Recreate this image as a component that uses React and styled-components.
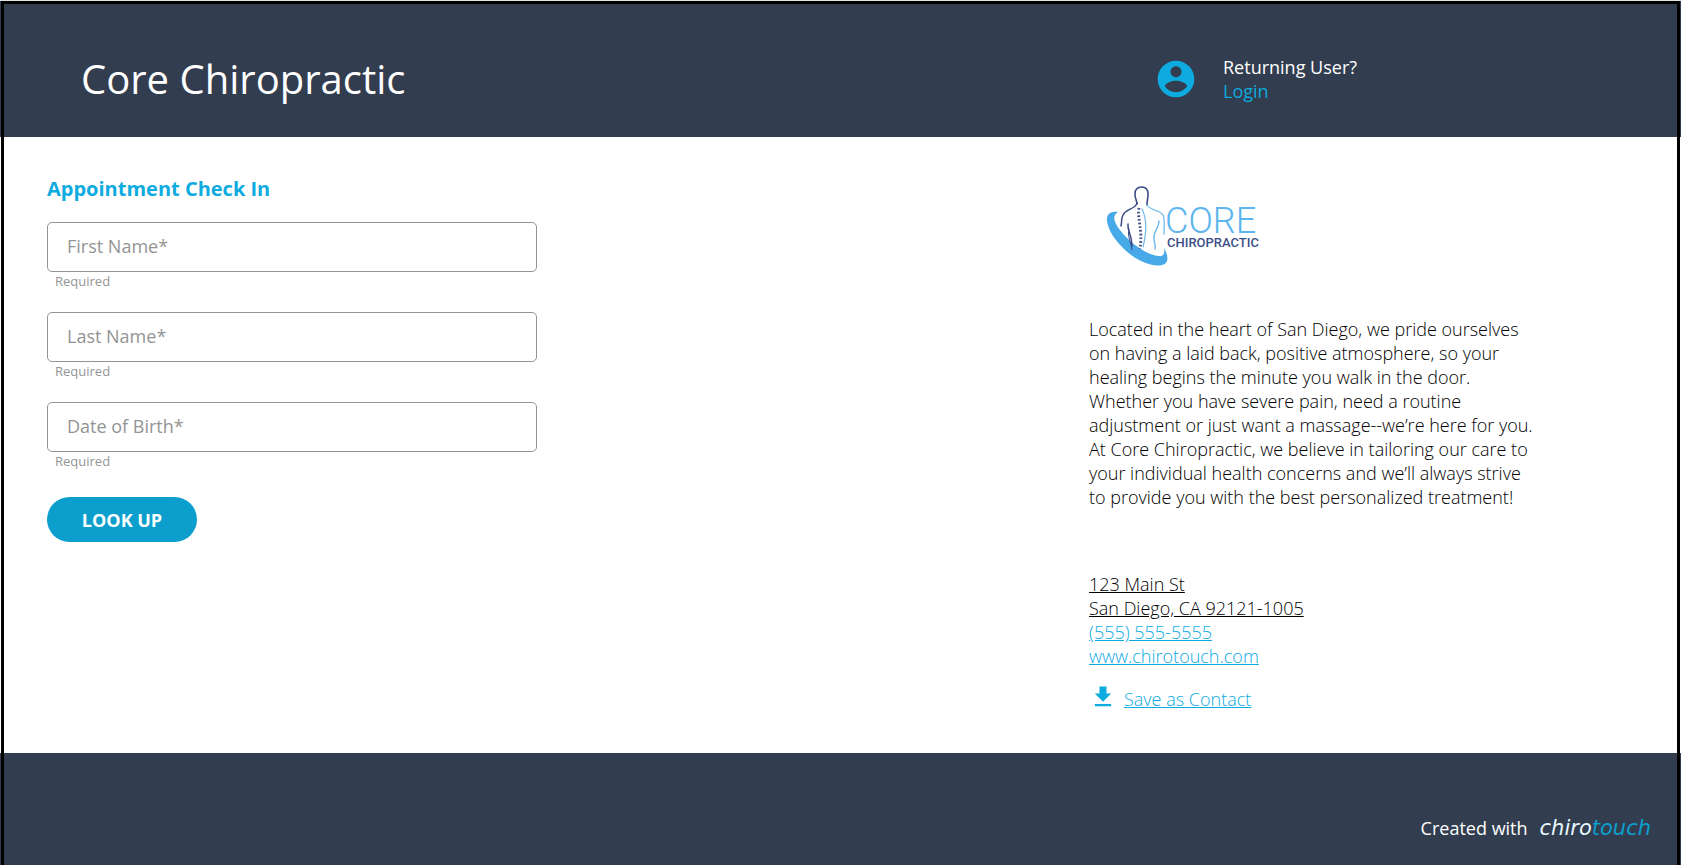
import React from "react";
import styled, { createGlobalStyle } from "styled-components";
import { MdFileDownload } from "react-icons/md";

const navy = "#323d4f";
const blue = "#0dabdf";

const GlobalStyle = createGlobalStyle`
  *, *::before, *::after { box-sizing: border-box; }
  body {
    margin: 0;
    background: #fff;
    color: #000;
    font-family: "Open Sans", "Noto Sans", sans-serif;
    font-size: 18px;
    line-height: 24px;
  }
`;

const Page = styled.div`
  position: relative;
  display: flex;
  flex-direction: column;
  min-height: 100vh;
  border-top: 1px solid #dbe6e4;
`;

const Frame = styled.div`
  position: absolute;
  inset: 0 1px;
  border: 3px solid #000;
  border-bottom: 0;
  pointer-events: none;
`;

const columns = `
  display: grid;
  grid-template-columns: minmax(0, 1fr) minmax(0, 592px);
  padding-left: 47px;
`;

const Header = styled.header`
  ${columns}
  align-items: center;
  height: 136px;
  padding-top: 20px;
  background: ${navy};
  color: #fff;
`;

const Title = styled.h1`
  margin: 0;
  padding-left: 34px;
  font-size: 40px;
  line-height: 56px;
  font-weight: 400;
`;

const Account = styled.div`
  display: flex;
  align-items: center;
  gap: 25px;
  padding-left: 65px;
`;

const AccountIcon = styled.svg`
  width: 44px;
  height: 44px;
  fill: ${blue};
`;

const AccountText = styled.div`
  display: flex;
  flex-direction: column;
`;

const Link = styled.a`
  color: ${(p) => (p.$dark ? "#000" : blue)};
  font-weight: ${(p) => (p.$plain ? 400 : 300)};
  text-decoration: ${(p) => (p.$plain ? "none" : "underline")};
`;

const Main = styled.main`
  ${columns}
  flex: 1;
  align-items: start;
  padding-top: 40px;
  padding-bottom: 40px;
`;

const Form = styled.form`
  display: flex;
  flex-direction: column;
  align-items: flex-start;
  width: 100%;
  max-width: 490px;
`;

const FormTitle = styled.h2`
  margin: 0 0 21px;
  color: ${blue};
  font-size: 20px;
  line-height: 24px;
  font-weight: 700;
`;

const Field = styled.div`
  display: flex;
  flex-direction: column;
  width: 100%;
  margin-bottom: 22px;
`;

const Input = styled.input`
  width: 100%;
  height: 50px;
  padding: 0 19px 2px;
  border: 1px solid #949494;
  border-radius: 5px;
  background: #fff;
  font: inherit;
  &::placeholder { color: #949494; opacity: 1; }
`;

const Hint = styled.span`
  padding-left: 8px;
  color: #949494;
  font-size: 13px;
  line-height: 18px;
`;

const Submit = styled.button`
  width: 150px;
  height: 45px;
  margin-top: 5px;
  border: 0;
  border-radius: 23px;
  background: #0c9fcd;
  color: #fff;
  font: inherit;
  font-weight: 700;
  cursor: pointer;
`;

const Info = styled.section`
  display: flex;
  flex-direction: column;
  align-items: flex-start;
`;

const Logo = styled.svg`
  width: 190px;
  height: 100px;
`;

const About = styled.p`
  max-width: 450px;
  margin: 40px 0 63px;
  font-weight: 300;
`;

const Contact = styled.address`
  display: flex;
  flex-direction: column;
  align-items: flex-start;
  font-style: normal;
`;

const SaveRow = styled.div`
  display: flex;
  align-items: flex-end;
  gap: 7px;
  margin-top: 15px;
  color: ${blue};
`;

const Footer = styled.footer`
  display: flex;
  align-items: center;
  justify-content: flex-end;
  gap: 12px;
  height: 112px;
  padding: 38px 30px 0;
  background: ${navy};
  color: #fff;
`;

const Brand = styled.span`
  color: ${(p) => (p.$accent ? "#0c9fcd" : "#e6f6fd")};
  font-family: "DejaVu Sans", sans-serif;
  font-size: 21px;
  font-style: italic;
`;

const fields = [
  { id: "firstName", label: "First Name*" },
  { id: "lastName", label: "Last Name*" },
  { id: "birthDate", label: "Date of Birth*" },
];

function CoreLogo() {
  return (
    <Logo viewBox="0 0 190 100" role="img" aria-label="Core Chiropractic">
      <path
        d="M29 35C22 34 17 37 18 44C20 59 37 77 52 84C65 90 76 90 78 84C79 80 78 76 75 71C76 76 75 80 69 79C54 77 34 60 27 47C24 41 25 38 29 35Z"
        fill="#48a9e8"
      />
      <g fill="none" strokeLinecap="round">
        <path d="M48 27C48 24 46 22 46 17C46 12 49 10 52.700 10C56 10 59 12 59 17C59 22 58 24 58 28" stroke="#3a4a84" strokeWidth="1.600" />
        <path d="M48 26C47 32 36 32 34 38C32 42 33 45 32 49" stroke="#3a4a84" strokeWidth="1.500" />
        <path d="M58 28C62 34 71 33 74 38C76 42 75 48 75 57" stroke="#6bb8ec" strokeWidth="1.300" />
        <path d="M39 47C38 54 43 57 43 69" stroke="#3a4a84" strokeWidth="1.500" />
        <path d="M40 52C38 60 42 64 43 73" stroke="#3a4a84" strokeWidth="1" />
        <path d="M70 44C70 52 64 54 65 62C65 66 67 68 66 72" stroke="#6bb8ec" strokeWidth="1.400" />
        <path d="M53 32C59 44 57 58 54 70" stroke="#6bb8ec" strokeWidth="1.200" />
        <path d="M50 31C48 42 54 52 51 72" stroke="#3a4a84" strokeWidth="2.800" strokeDasharray="1.700 2" strokeLinecap="butt" />
      </g>
      <text fontFamily="Roboto, sans-serif">
        <tspan x="76" y="56" fill="#5cb5ee" fontWeight="300" fontSize="36">CORE</tspan>
        <tspan x="78" y="70" fill="#3d4f88" fontWeight="500" fontSize="13">CHIROPRACTIC</tspan>
      </text>
    </Logo>
  );
}

export default function App() {
  return (
    <>
      <GlobalStyle />
      <Page>
        <Header>
          <Title>Core Chiropractic</Title>
          <Account>
            <AccountIcon viewBox="0 0 24 24" aria-hidden="true">
              <path d="M12 2C6.480 2 2 6.480 2 12s4.480 10 10 10 10-4.480 10-10S17.520 2 12 2zm0 3c1.660 0 3 1.340 3 3s-1.340 3-3 3-3-1.340-3-3 1.340-3 3-3zm0 14.200c-2.500 0-4.710-1.280-6-3.220.030-1.990 4-3.080 6-3.080 1.990 0 5.970 1.090 6 3.080-1.290 1.940-3.500 3.220-6 3.220z" />
            </AccountIcon>
            <AccountText>
              <span>Returning User?</span>
              <Link $plain href="#login">Login</Link>
            </AccountText>
          </Account>
        </Header>
        <Main>
          <Form onSubmit={(e) => e.preventDefault()}>
            <FormTitle>Appointment Check In</FormTitle>
            {fields.map((f) => (
              <Field key={f.id}>
                <Input id={f.id} aria-label={f.label} placeholder={f.label} aria-describedby={f.id + "Hint"} required />
                <Hint id={f.id + "Hint"}>Required</Hint>
              </Field>
            ))}
            <Submit type="submit">LOOK UP</Submit>
          </Form>
          <Info>
            <CoreLogo />
            <About>
              Located in the heart of San Diego, we pride ourselves on having a
              laid back, positive atmosphere, so your healing begins the minute
              you walk in the door. Whether you have severe pain, need a routine
              adjustment or just want a massage--we’re here for you. At Core
              Chiropractic, we believe in tailoring our care to your individual
              health concerns and we’ll always strive to provide you with the
              best personalized treatment!
            </About>
            <Contact>
              <Link $dark href="#map">
                123 Main St
                <br />
                San Diego, CA 92121-1005
              </Link>
              <Link href="tel:5555555555">(555) 555-5555</Link>
              <Link href="#website">www.chirotouch.com</Link>
            </Contact>
            <SaveRow>
              <MdFileDownload size={28} />
              <Link href="#contact">Save as Contact</Link>
            </SaveRow>
          </Info>
        </Main>
        <Footer>
          <span>Created with</span>
          <span>
            <Brand>chiro</Brand>
            <Brand $accent>touch</Brand>
          </span>
        </Footer>
        <Frame />
      </Page>
    </>
  );
}
